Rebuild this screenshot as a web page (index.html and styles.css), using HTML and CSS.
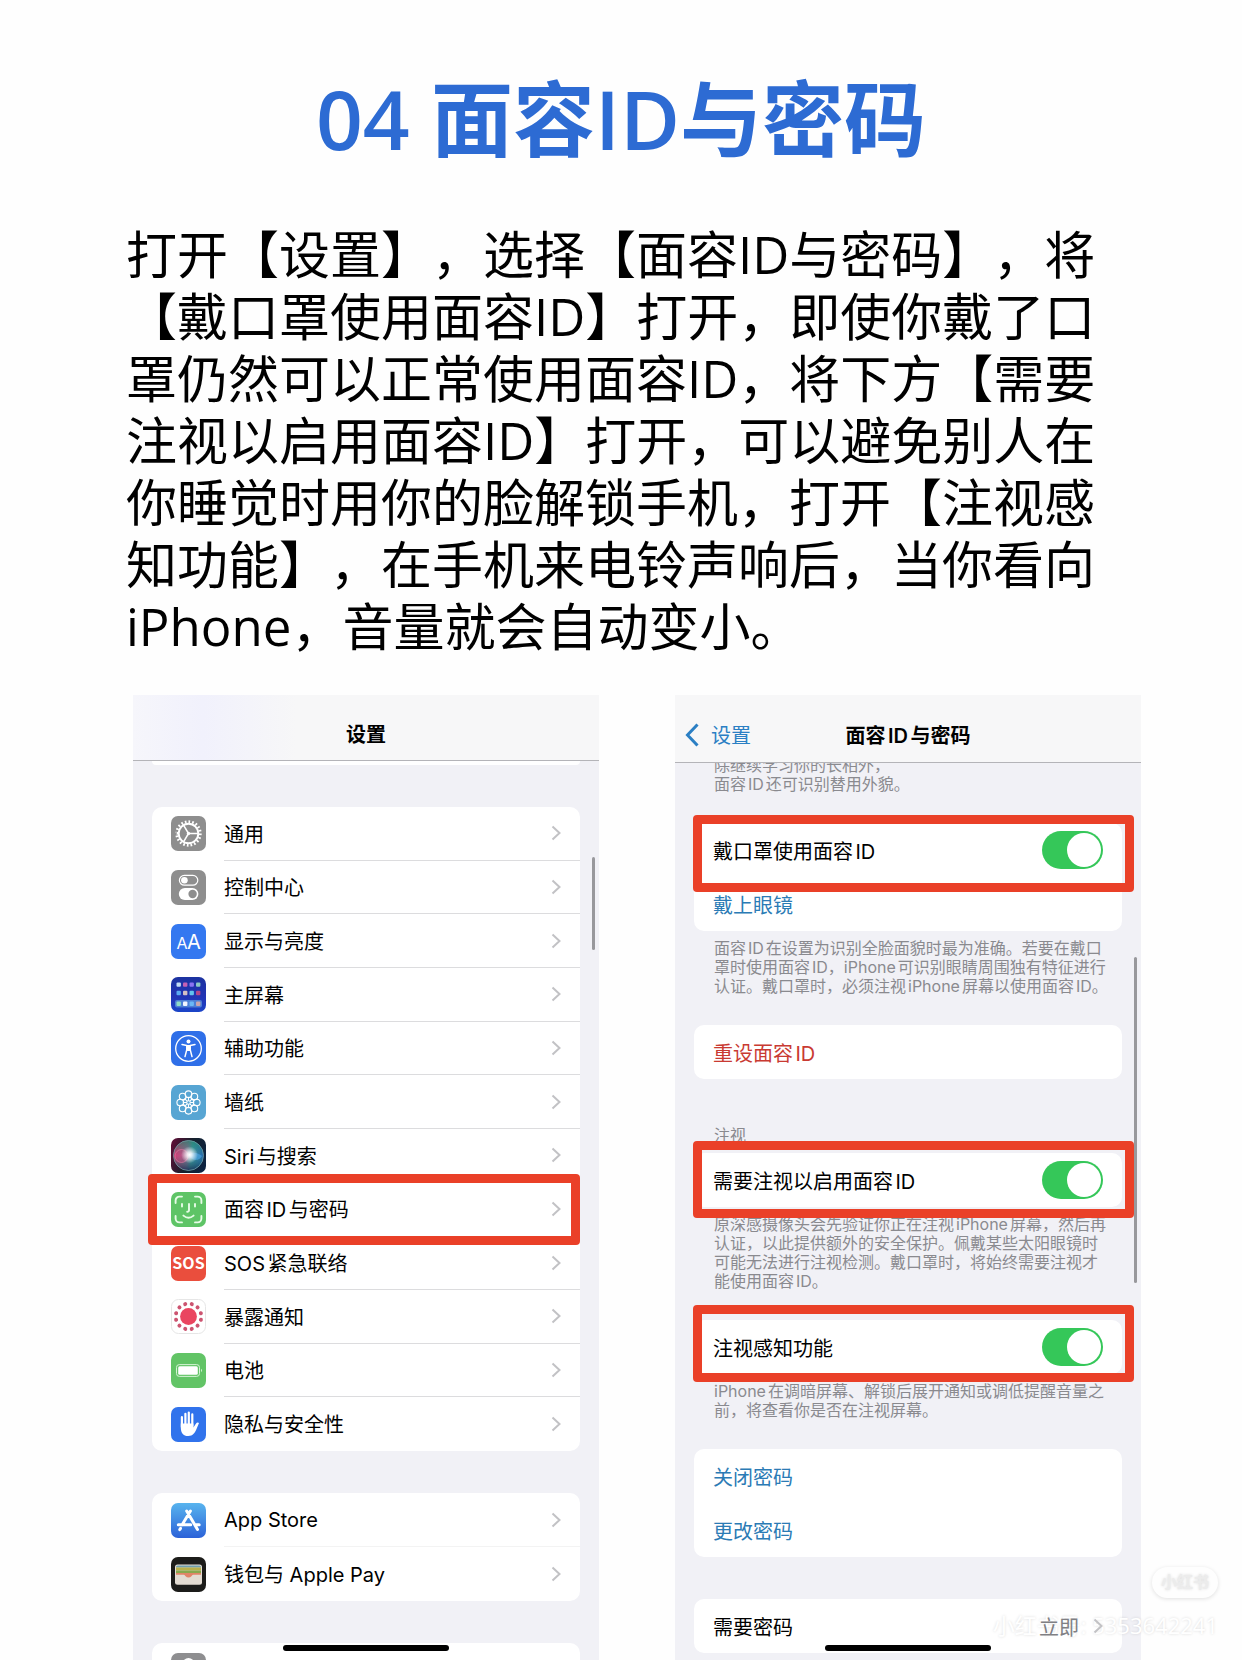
FILE: index.html
```html
<!DOCTYPE html>
<html lang="zh-CN">
<head>
  <meta charset="UTF-8">
  <meta name="viewport" content="width=device-width, initial-scale=1.0">
  <title>04 面容ID与密码</title>
  <link rel="stylesheet" href="styles.css">
</head>
<body>
  <svg class="sprite" aria-hidden="true">
    <symbol id="chevron" viewBox="0 0 10 16">
      <path d="M1.5 1.5 8.5 8l-7 6.5" fill="none" stroke="currentColor" stroke-width="2" />
    </symbol>
  </svg>

  <main class="page">
    <h1 class="title">04 面容ID与密码</h1>

    <p class="intro">
      打开【设置】，选择【面容ID与密码】，将<br>【戴口罩使用面容ID】打开，即使你戴了口<br>罩仍然可以正常使用面容ID，将下方【需要<br>注视以启用面容ID】打开，可以避免别人在<br>你睡觉时用你的脸解锁手机，打开【注视感<br>知功能】，在手机来电铃声响后，当你看向<br>iPhone，音量就会自动变小。
    </p>

    <div class="phones">
      <!-- Settings list -->
      <section class="phone">
        <header class="nav nav-tint">
          <h2>设置</h2>
        </header>

        <div class="content">
          <div class="card card-end"></div>

          <nav class="card card-main">
            <a class="row" href="#">
              <svg class="icon" viewBox="0 0 35 35">
                <rect width="35" height="35" rx="7" fill="#8e8e8e" />
                <g fill="none" stroke="#fff">
                  <circle cx="17.5" cy="17.5" r="11.8" stroke-width="2.8" pathLength="40" stroke-dasharray="0.9 1.1" />
                  <circle cx="17.5" cy="17.5" r="9.8" stroke-width="1.9" />
                  <path d="M17.5 17.5H27M17.5 17.5l-4.8-8.2M17.5 17.5l-4.8 8.2" stroke-width="1.5" />
                </g>
                <circle cx="17.5" cy="17.5" r="1.7" fill="#fff" />
              </svg>
              <span class="row-body">通用<svg class="chevron"><use href="#chevron" /></svg></span>
            </a>
            <a class="row" href="#">
              <svg class="icon" viewBox="0 0 35 35">
                <rect width="35" height="35" rx="7" fill="#8e8e8e" />
                <rect x="8.4" y="5.4" width="18.4" height="9.8" rx="4.9" fill="none" stroke="#fff" stroke-width="1.2" />
                <circle cx="13.4" cy="10.3" r="3.3" fill="#fff" />
                <rect x="7.8" y="18" width="19.6" height="12" rx="6" fill="#fff" />
                <circle cx="21.6" cy="24" r="4.2" fill="#8e8e8e" />
              </svg>
              <span class="row-body">控制中心<svg class="chevron"><use href="#chevron" /></svg></span>
            </a>
            <a class="row" href="#">
              <svg class="icon" viewBox="0 0 35 35">
                <rect width="35" height="35" rx="7" fill="#3478f0" />
                <text x="5.4" y="24.6" font-size="16" fill="#fff">A</text>
                <text x="16" y="24.6" font-size="20" fill="#fff">A</text>
              </svg>
              <span class="row-body">显示与亮度<svg class="chevron"><use href="#chevron" /></svg></span>
            </a>
            <a class="row" href="#">
              <svg class="icon" viewBox="0 0 35 35">
                <defs>
                  <linearGradient id="home" x1="0" y1="0" x2="0" y2="1">
                    <stop offset="0" stop-color="#1c33a0" />
                    <stop offset="0.55" stop-color="#2233b4" />
                    <stop offset="1" stop-color="#1b45c8" />
                  </linearGradient>
                </defs>
                <rect width="35" height="35" rx="7" fill="url(#home)" />
                <rect x="4" y="23" width="27" height="7.6" rx="2" fill="#4d7fd6" />
                <rect x="5.5" y="5.4" width="4.4" height="4.4" rx="1" fill="#c2dcf5" />
                <rect x="12" y="5.4" width="4.4" height="4.4" rx="1" fill="#c560b4" />
                <rect x="18.5" y="5.4" width="4.4" height="4.4" rx="1" fill="#8b74f2" />
                <rect x="25" y="5.4" width="4.4" height="4.4" rx="1" fill="#8cc9c4" />
                <rect x="5.5" y="13.8" width="4.4" height="4.4" rx="1" fill="#5aa9f2" />
                <rect x="12" y="13.8" width="4.4" height="4.4" rx="1" fill="#d5bfc4" />
                <rect x="18.5" y="13.8" width="4.4" height="4.4" rx="1" fill="#62c3ee" />
                <rect x="25" y="13.8" width="4.4" height="4.4" rx="1" fill="#b2478c" />
                <rect x="5.5" y="24.6" width="4.4" height="4.4" rx="1" fill="#8fdcc6" />
                <rect x="12" y="24.6" width="4.4" height="4.4" rx="1" fill="#f2f5ff" />
                <rect x="18.5" y="24.6" width="4.4" height="4.4" rx="1" fill="#6bb8f5" />
                <rect x="25" y="24.6" width="4.4" height="4.4" rx="1" fill="#c9a5ae" />
              </svg>
              <span class="row-body">主屏幕<svg class="chevron"><use href="#chevron" /></svg></span>
            </a>
            <a class="row" href="#">
              <svg class="icon" viewBox="0 0 35 35">
                <rect width="35" height="35" rx="7" fill="#2f6fe8" />
                <circle cx="17.5" cy="17.5" r="12.8" fill="none" stroke="#fff" stroke-width="1.3" />
                <circle cx="17.5" cy="10.6" r="2" fill="#fff" />
                <path d="M11 13.4l4.8 1v4.2l-1.8 7M24 13.4l-4.8 1v4.2l1.8 7" fill="none" stroke="#fff" stroke-width="1.5" stroke-linecap="round" stroke-linejoin="round" />
                <path d="M15.2 13.9h4.6v5.3l-1 .9h-2.6l-1-.9z" fill="#fff" />
              </svg>
              <span class="row-body">辅助功能<svg class="chevron"><use href="#chevron" /></svg></span>
            </a>
            <a class="row" href="#">
              <svg class="icon" viewBox="0 0 35 35">
                <rect width="35" height="35" rx="7" fill="#57a5d3" />
                <g fill="none" stroke="#fff" stroke-width="1.1">
                  <circle cx="17.5" cy="9.2" r="3.3" />
                  <circle cx="23.4" cy="11.6" r="3.3" />
                  <circle cx="25.8" cy="17.5" r="3.3" />
                  <circle cx="23.4" cy="23.4" r="3.3" />
                  <circle cx="17.5" cy="25.8" r="3.3" />
                  <circle cx="11.6" cy="23.4" r="3.3" />
                  <circle cx="9.2" cy="17.5" r="3.3" />
                  <circle cx="11.6" cy="11.6" r="3.3" />
                  <circle cx="17.5" cy="17.5" r="5.2" />
                  <circle cx="17.5" cy="17.5" r="1.8" />
                  <path d="M17.5 12.3v3.4M17.5 19.3v3.4M12.3 17.5h3.4M19.3 17.5h3.4M13.8 13.8l2.4 2.4M18.8 18.8l2.4 2.4M21.2 13.8l-2.4 2.4M16.2 18.8l-2.4 2.4" />
                </g>
              </svg>
              <span class="row-body">墙纸<svg class="chevron"><use href="#chevron" /></svg></span>
            </a>
            <a class="row" href="#">
              <svg class="icon" viewBox="0 0 35 35">
                <defs>
                  <linearGradient id="siri-back" x1="0" y1="0.3" x2="1" y2="0.6">
                    <stop offset="0" stop-color="#5a1036" />
                    <stop offset="0.5" stop-color="#16202c" />
                    <stop offset="1" stop-color="#0c2340" />
                  </linearGradient>
                  <linearGradient id="siri-orb" x1="0" y1="0.5" x2="1" y2="0.6">
                    <stop offset="0" stop-color="#d0356f" />
                    <stop offset="0.45" stop-color="#8a6f98" />
                    <stop offset="0.6" stop-color="#4596a6" />
                    <stop offset="1" stop-color="#2467b0" />
                  </linearGradient>
                  <linearGradient id="siri-shade" x1="0" y1="0" x2="0" y2="1">
                    <stop offset="0" stop-color="#12805c" stop-opacity="0.6" />
                    <stop offset="0.5" stop-color="#12805c" stop-opacity="0" />
                    <stop offset="1" stop-color="#14204c" stop-opacity="0.8" />
                  </linearGradient>
                  <radialGradient id="siri-glow">
                    <stop offset="0" stop-color="#fff" />
                    <stop offset="0.3" stop-color="#fff" stop-opacity="0.8" />
                    <stop offset="1" stop-color="#fff" stop-opacity="0" />
                  </radialGradient>
                </defs>
                <rect width="35" height="35" rx="7" fill="url(#siri-back)" />
                <circle cx="17.5" cy="17.5" r="15" fill="url(#siri-orb)" />
                <circle cx="17.5" cy="17.5" r="15" fill="url(#siri-shade)" stroke="#6d9da5" stroke-width="0.8" />
                <circle cx="10.5" cy="18" r="6.5" fill="#d54a80" fill-opacity="0.35" stroke="#e77ca5" stroke-width="0.6" />
                <path d="M17 17c5-4 10-2 14 1-3 5-9 6-14-1z" fill="#49a4e0" fill-opacity="0.7" />
                <circle cx="18.5" cy="16.8" r="8.5" fill="url(#siri-glow)" />
              </svg>
              <span class="row-body row-last">Siri与搜索<svg class="chevron"><use href="#chevron" /></svg></span>
            </a>
            <a class="row mark mark-list" href="#">
              <svg class="icon" viewBox="0 0 35 35">
                <rect width="35" height="35" rx="7" fill="#5ec466" />
                <g fill="none" stroke="#e6fbe6" stroke-width="1.9" stroke-linecap="round">
                  <path d="M4.6 11V8.4a3.8 3.8 0 0 1 3.8-3.8H11M24 4.6h2.6a3.8 3.8 0 0 1 3.8 3.8V11M30.4 24v2.6a3.8 3.8 0 0 1-3.8 3.8H24M11 30.4H8.4a3.8 3.8 0 0 1-3.8-3.8V24" />
                  <path d="M11 12v2.6M24 12v2.6M18 12v6.2q0 1.6-1.8 1.5M12.4 23.6q5.1 4.4 10.2 0" />
                </g>
              </svg>
              <span class="row-body row-last">面容ID与密码<svg class="chevron"><use href="#chevron" /></svg></span>
            </a>
            <a class="row" href="#">
              <svg class="icon" viewBox="0 0 35 35">
                <rect width="35" height="35" rx="7" fill="#ea4e3d" />
                <text class="sos" x="17.5" y="23.4" text-anchor="middle" fill="#fff">SOS</text>
              </svg>
              <span class="row-body">SOS紧急联络<svg class="chevron"><use href="#chevron" /></svg></span>
            </a>
            <a class="row" href="#">
              <svg class="icon" viewBox="0 0 35 35">
                <rect x="0.5" y="0.5" width="34" height="34" rx="7" fill="#fff" stroke="#e6e6e6" />
                <circle cx="17.5" cy="17.5" r="8.4" fill="#ea4560" />
                <circle cx="17.5" cy="17.5" r="12.8" fill="none" stroke="#cc5470" stroke-width="4" stroke-linecap="round" pathLength="120" stroke-dasharray="0.01 9.99" stroke-dashoffset="5" />
              </svg>
              <span class="row-body">暴露通知<svg class="chevron"><use href="#chevron" /></svg></span>
            </a>
            <a class="row" href="#">
              <svg class="icon" viewBox="0 0 35 35">
                <rect width="35" height="35" rx="7" fill="#62c466" />
                <rect x="5.5" y="11.6" width="23" height="11.8" rx="2.8" fill="none" stroke="#d6f3d6" />
                <rect x="7.2" y="13.3" width="19.6" height="8.4" rx="1.5" fill="#fff" />
                <path d="M30 15.8q2 1.7 0 3.4z" fill="#d6f3d6" />
              </svg>
              <span class="row-body">电池<svg class="chevron"><use href="#chevron" /></svg></span>
            </a>
            <a class="row" href="#">
              <svg class="icon" viewBox="0 0 35 35">
                <rect width="35" height="35" rx="7" fill="#3173ec" />
                <path d="M10.9 10.2V20M14.4 6.8V18M17.8 5.6V18M21.3 7.4V19" fill="none" stroke="#fff" stroke-width="2.2" stroke-linecap="round" />
                <path d="M9.8 16.5h12.6v4l2.3-3.6q1.5-1.9 3.3-1-1.3 3-2.5 6.2c-1.3 3.6-3.6 7-8.2 7-5.2 0-7.5-3.6-7.5-8.6z" fill="#fff" />
              </svg>
              <span class="row-body row-last">隐私与安全性<svg class="chevron"><use href="#chevron" /></svg></span>
            </a>
          </nav>

          <nav class="card">
            <a class="row" href="#">
              <svg class="icon" viewBox="0 0 35 35">
                <defs>
                  <linearGradient id="store" x1="0" y1="0" x2="0" y2="1">
                    <stop offset="0" stop-color="#58b4ee" />
                    <stop offset="1" stop-color="#2c62d8" />
                  </linearGradient>
                </defs>
                <rect width="35" height="35" rx="7" fill="url(#store)" />
                <path d="M19.4 8 11 22M15.7 8l10.8 18.4M7.3 21.8h12.4M24.6 21.8h3.6M9.5 25.4l-.7 1.2" fill="none" stroke="#fff" stroke-width="3" stroke-linecap="round" />
              </svg>
              <span class="row-body row-faint">App Store<svg class="chevron"><use href="#chevron" /></svg></span>
            </a>
            <a class="row" href="#">
              <svg class="icon" viewBox="0 0 35 35">
                <rect width="35" height="35" rx="7" fill="#1c1c1a" />
                <rect x="4" y="7.4" width="27" height="20.4" rx="2.5" fill="#e3dcd3" />
                <path d="M5 10.5V10q0-1.6 1.6-1.6h21.8Q30 8.4 30 10v.5z" fill="#6f9fae" />
                <path d="M5 10.5h25v3H5z" fill="#b9b04a" />
                <path d="M5 13.5h25v2.6H5z" fill="#87a84e" />
                <path d="M5 16.1h25v1.6h-7.5q-1.2 0-1.8 1.2-3.2 3-6.4 0-.6-1.2-1.8-1.2H5z" fill="#e08468" />
              </svg>
              <span class="row-body row-last">钱包与 Apple Pay<svg class="chevron"><use href="#chevron" /></svg></span>
            </a>
          </nav>

          <div class="card">
            <div class="row">
              <svg class="icon" viewBox="0 0 35 35">
                <rect width="35" height="35" rx="7" fill="#8e8e90" />
                <circle cx="17.5" cy="11" r="6" fill="#fff" />
                <circle cx="17.5" cy="9.5" r="1.5" fill="#8e8e90" />
                <path d="M15.5 15h4v12l-2 2.5-2-2.5z" fill="#fff" />
              </svg>
            </div>
          </div>
        </div>

        <div class="scrollbar scrollbar-short"></div>
        <div class="home-bar"></div>
      </section>

      <!-- Face ID & passcode -->
      <section class="phone">
        <header class="nav nav-sub">
          <a class="back" href="#">
            <svg viewBox="0 0 14 24"><path d="M12.5 1.5 2.5 12l10 10.5" fill="none" stroke="currentColor" stroke-width="3" /></svg>设置
          </a>
          <h2>面容ID与密码</h2>
        </header>

        <div class="content">
          <p class="note note-cut">除继续学习你的长相外，<br>面容ID还可识别替用外貌。</p>

          <div class="card">
            <label class="row mark mark-first">戴口罩使用面容ID<input class="switch" type="checkbox" checked></label>
            <button class="row link" type="button">戴上眼镜</button>
          </div>
          <p class="note">面容ID在设置为识别全脸面貌时最为准确。若要在戴口<br>罩时使用面容ID，iPhone可识别眼睛周围独有特征进行<br>认证。戴口罩时，必须注视iPhone屏幕以使用面容ID。</p>

          <div class="card">
            <button class="row danger" type="button">重设面容ID</button>
          </div>

          <h3 class="label">注视</h3>
          <div class="card">
            <label class="row mark mark-middle">需要注视以启用面容ID<input class="switch" type="checkbox" checked></label>
          </div>
          <p class="note">原深感摄像头会先验证你正在注视iPhone屏幕，然后再<br>认证，以此提供额外的安全保护。佩戴某些太阳眼镜时<br>可能无法进行注视检测。戴口罩时，将始终需要注视才<br>能使用面容ID。</p>

          <div class="card">
            <label class="row mark mark-third">注视感知功能<input class="switch" type="checkbox" checked></label>
          </div>
          <p class="note">iPhone在调暗屏幕、解锁后展开通知或调低提醒音量之<br>前，将查看你是否在注视屏幕。</p>

          <div class="card">
            <button class="row link" type="button">关闭密码</button>
            <button class="row link" type="button">更改密码</button>
          </div>

          <div class="card">
            <a class="row" href="#">需要密码<span class="value">立即<svg class="chevron"><use href="#chevron" /></svg></span></a>
          </div>
        </div>

        <div class="scrollbar scrollbar-long"></div>
        <div class="home-bar"></div>
      </section>
    </div>

    <div class="watermark">
      <span class="badge">小红书</span>
      <span class="account">小红书号: 5353642241</span>
    </div>
  </main>
</body>
</html>
```

FILE: styles.css
```css
* {
  box-sizing: border-box;
}

body {
  margin: 0;
  background-color: #fefefe;
  color: #000;
  font-family: "Open Sans", "Noto Sans CJK SC", sans-serif;
}

h1, h2, h3, p {
  margin: 0;
  font-weight: normal;
}

a {
  color: inherit;
  text-decoration: none;
}

.sprite {
  position: absolute;
  width: 0;
  height: 0;
}

.page {
  position: relative;
  display: flex;
  flex-direction: column;
  height: 100vh;
  overflow: hidden;
}

.title {
  padding-top: 68px;
  color: #2d6bd3;
  font-size: 82px;
  font-weight: 600;
  line-height: 100px;
  text-align: center;
}

.intro {
  padding: 55px 0 0 126px;
  font-size: 51px;
  line-height: 62px;
  white-space: nowrap;
  text-spacing-trim: space-all;
}

.phones {
  display: grid;
  flex: 1;
  grid-template-columns: 1fr 1fr;
  gap: 76px;
  min-height: 0;
  padding: 38px 101px 0 133px;
  font-family: Inter, "Noto Sans CJK SC", sans-serif;
  font-size: 20px;
  text-autospace: normal;
}

.phone {
  position: relative;
  display: flex;
  flex-direction: column;
  min-height: 0;
  overflow: hidden;
  background-color: #f1f1f6;
}

/* Top bar */
.nav {
  display: grid;
  flex: none;
  grid-template-columns: 1fr auto 1fr;
  align-items: center;
  height: 66px;
  padding: 12px 10px 0;
  border-bottom: 1px solid #b4b4b8;
  background-color: #f7f7f8;
}

.nav-tint {
  background-image: linear-gradient(90deg, #f6f6fb, #f1f1fc 15%, #f7f7f8 35%);
}

.nav-sub {
  height: 68px;
}

.nav h2 {
  grid-column: 2;
  font-size: 20px;
  font-weight: 600;
}

.back {
  display: flex;
  align-items: center;
  gap: 12px;
  color: #2b7fc4;
}

.back svg {
  width: 14px;
  height: 24px;
}

/* Grouped cards */
.content {
  flex: 1;
  min-height: 0;
  padding: 0 19px;
  overflow: hidden;
}

.card {
  margin-bottom: 42px;
  border-radius: 10px;
  background-color: #fff;
}

.card-end {
  height: 4px;
  border-radius: 0 0 10px 10px;
}

.card-main {
  display: grid;
  grid-auto-rows: 1fr;
  height: 644px;
}

.card-main .row {
  height: auto;
}

.row {
  position: relative;
  display: flex;
  align-items: center;
  justify-content: space-between;
  width: 100%;
  height: 54px;
  padding: 0 19px;
  border: 0;
  background: none;
  color: #000;
  font: inherit;
  text-align: left;
}

.content nav .row {
  padding-right: 0;
}

.icon {
  flex: none;
  width: 35px;
  height: 35px;
  margin-right: 18px;
  font-family: Inter, sans-serif;
}

.sos {
  font-family: "Liberation Sans Narrow", "Noto Sans CJK SC", sans-serif;
  font-size: 16px;
  font-weight: bold;
}

.row-body {
  display: flex;
  flex: 1;
  align-items: center;
  justify-content: space-between;
  height: 100%;
  padding-right: 19px;
  border-bottom: 1px solid #dcdcde;
}

.row-faint {
  border-color: #f3f3f3;
}

.row-last {
  border-color: transparent;
}

.chevron {
  width: 10px;
  height: 16px;
  color: #c2c2c5;
}

.row.link {
  color: #2b7bb5;
}

.row.danger {
  color: #c93a32;
}

.value {
  position: relative;
  z-index: 2;
  display: flex;
  align-items: center;
  gap: 14px;
  color: #808084;
}

.note,
.label {
  padding: 0 20px;
  color: #8a8a8f;
  font-size: 16px;
  line-height: 19px;
  white-space: nowrap;
}

.note {
  margin: -34px 0 29px;
}

.note-cut {
  margin-top: -7px;
}

.label {
  margin: 47px 0 8px;
}

/* Switch */
.switch {
  width: 61px;
  height: 38px;
  margin: 0;
  padding: 2px;
  border-radius: 19px;
  background-color: #35c759;
  appearance: none;
  cursor: pointer;
}

.switch::before {
  content: "";
  display: block;
  width: 34px;
  height: 34px;
  border-radius: 50%;
  background-color: #fff;
}

.switch:checked::before {
  margin-left: auto;
}

/* Red frames drawn over the rows */
.mark::after {
  content: "";
  position: absolute;
  z-index: 1;
  border: 9px solid #ea4028;
  border-radius: 4px;
  pointer-events: none;
}

.mark-list::after {
  inset: -9px 0 -9px -4px;
}

.mark-first::after {
  inset: -8px -12px -15px -1px;
}

.mark-middle::after {
  inset: -12px -12px -11px -1px;
}

.mark-third::after {
  inset: -15px -12px -8px -1px;
}

.scrollbar {
  position: absolute;
  right: 4px;
  width: 3px;
  border-radius: 2px;
  background-color: #98989c;
}

.scrollbar-short {
  top: 162px;
  height: 93px;
}

.scrollbar-long {
  top: 262px;
  height: 326px;
}

.home-bar {
  position: absolute;
  bottom: 9px;
  left: 50%;
  width: 166px;
  height: 6px;
  border-radius: 3px;
  background-color: #000;
  transform: translateX(-50%);
}

/* Watermark */
.watermark {
  position: absolute;
  right: 24px;
  bottom: 18px;
  z-index: 1;
  display: flex;
  flex-direction: column;
  align-items: flex-end;
  gap: 10px;
  color: #fff;
  text-shadow: 0 0 3px rgba(0, 0, 0, 0.15);
}

.badge {
  padding: 0 9px;
  border-radius: 16px;
  box-shadow: 0 1px 4px rgba(0, 0, 0, 0.12);
  color: #ececec;
  font-size: 16px;
  font-weight: bold;
  line-height: 31px;
}

.account {
  font-size: 22px;
  line-height: 34px;
}
```
